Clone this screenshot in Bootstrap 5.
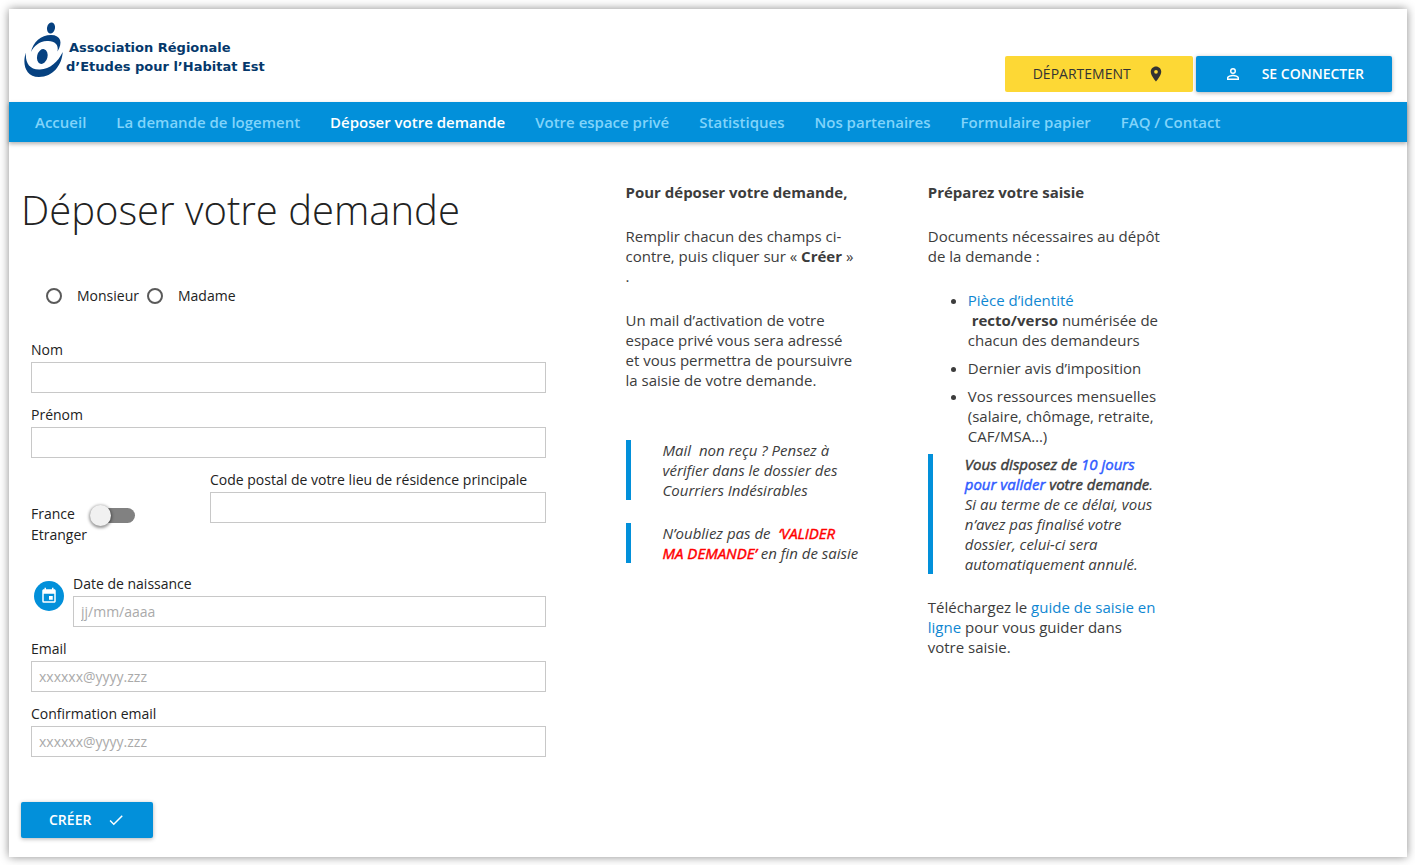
<!DOCTYPE html>
<html lang="fr">
<head>
<meta charset="utf-8">
<meta name="viewport" content="width=device-width, initial-scale=1">
<title>Déposer votre demande</title>
<link href="https://cdn.jsdelivr.net/npm/bootstrap@5.3.0/dist/css/bootstrap.min.css" rel="stylesheet">
<style>
  :root { --brand: #0290da; }
  body { font-family: "Open Sans", sans-serif; font-size: 15px; line-height: 20px; color: #3c3c3c; background: #fff; }
  a { color: #0f87d2; text-decoration: none; }
  p { margin-bottom: 24px; }
  .sheet { margin: 9px 8px 8px 9px; background: #fff; box-shadow: 0 0 9px rgba(0,0,0,.45); }
  .masthead { min-height: 93px; padding: 10px 15px; }
  .logo-name { font: 700 13px/19px "DejaVu Sans", sans-serif; color: #05386b; padding-top: 19px; }
  .logo-name span { display: block; white-space: nowrap; }
  .logo-name span:first-child { padding-left: 3px; }
  .action { --bs-btn-border-radius: 2px; --bs-btn-border-width: 0; --bs-btn-padding-x: 28px; --bs-btn-padding-y: 0; --bs-btn-font-size: 14px; --bs-btn-line-height: 36px; height: 36px; gap: 16px; }
  .action svg { width: 18px; height: 18px; fill: currentColor; }
  .action-brand, .action-brand:hover { background: var(--brand); color: #fff; font-weight: 600; box-shadow: 0 1px 4px rgba(0,0,0,.3); }
  .action-place, .action-place:hover { background: #fdd835; color: #333; }
  .action-login { gap: 20px; }
  .header-actions { gap: 3px; }
  .main-menu { background: var(--brand); padding: 0 11px; min-height: 40px; box-shadow: 0 2px 4px rgba(0,0,0,.3); }
  .main-menu .nav-link { padding: 0 15px; line-height: 40px; font-weight: 600; color: #81d4fa; }
  .main-menu .nav-link.active { color: #fff; }
  .content { max-width: 1221px; padding: 40px 0 19px 12px; }
  .col-form { padding-right: 70px; }
  .col-help { padding-right: 68px; }
  h1 { font-weight: 300; font-size: 40px; line-height: 44px; margin: 6px 0 0; color: #222; }
  .entry { color: #222; font-size: 14px; line-height: 21px; padding: 53px 10px 45px; }
  .civility { padding-left: 15px; margin-bottom: 33px; }
  .civility input { appearance: none; width: 16px; height: 16px; margin: 0 15px 0 0; border: 2px solid #5a5a5a; border-radius: 50%; }
  .civility input:checked { background: var(--brand); box-shadow: inset 0 0 0 2px #fff; }
  .field { margin-bottom: 11px; }
  .field label { display: block; margin-bottom: 2px; }
  .field .form-control { height: 31px; padding: 0 7px; border: 1px solid #c8c8c8; border-radius: 0; font-size: 14px; }
  .field .form-control::placeholder { color: #aaa; }
  .residence { margin-bottom: 28px; }
  .country { width: 179px; padding-top: 34px; }
  .country label { display: block; width: 112px; }
  .lever { appearance: none; position: relative; width: 40px; height: 15px; margin: 0 0 0 16px; border-radius: 15px; background: #818181; vertical-align: -4px; }
  .lever::before { content: ""; position: absolute; left: -5px; top: -3px; width: 21px; height: 21px; border-radius: 50%; background: #f1f1f1; box-shadow: 0 1px 3px 1px rgba(0,0,0,.4); }
  .lever:checked::before { left: 24px; }
  .date-btn { width: 30px; height: 30px; margin: 8px 9px 0 3px; border: 0; border-radius: 50%; background: var(--brand); }
  .note { margin: 0 0 23px; padding-left: 32px; border-left: 5px solid var(--brand); font-style: italic; }
  .note strong { font-weight: 400; -webkit-text-stroke: .03em currentColor; }
  .note .alert-word { color: #f00; }
  .note .delay { color: #2f5bff; }
  .before-notes { margin-bottom: 50px; }
  .documents { padding-left: 40px; margin: 0; }
  .documents li { margin-bottom: 8px; }
</style>
</head>
<body>
<div class="sheet">
  <header class="masthead d-flex flex-wrap justify-content-between">
    <a class="d-flex" href="#" aria-label="Accueil AREHA Est">
      <svg width="42" height="62" viewBox="0 0 42 62" fill="#064180" aria-hidden="true">
        <ellipse cx="27" cy="9" rx="4" ry="5.500" transform="rotate(12 27 9)"/>
        <ellipse cx="18.300" cy="37.500" rx="5.200" ry="7.600" transform="rotate(14 18.300 37.500)"/>
        <path d="M7 33C9 23 17 16 27 16C37 16 39 24 33.500 32.500C35 25 30 21.500 23 22C15 22.500 10 27 7 33Z"/>
        <path d="M2 33.500C-2 44 1 58 15 58C29 58 38 46 38.700 33C34 43 26 50 16 50.500C5 51 1 43 2 33.500Z"/>
      </svg>
      <div class="logo-name"><span>Association Régionale</span><span>d’Etudes pour l’Habitat Est</span></div>
    </a>
    <div class="header-actions d-flex align-self-end">
      <a class="btn action action-place d-flex align-items-center" href="#">DÉPARTEMENT
        <svg viewBox="0 0 24 24" aria-hidden="true"><path d="M12 2C8.130 2 5 5.130 5 9c0 5.250 7 13 7 13s7-7.750 7-13c0-3.870-3.130-7-7-7zm0 9.500a2.500 2.500 0 0 1 0-5 2.500 2.500 0 0 1 0 5z"/></svg>
      </a>
      <a class="btn action action-brand action-login d-flex align-items-center" href="#">
        <svg viewBox="0 0 24 24" aria-hidden="true"><path d="M12 5.900a2.100 2.100 0 1 1 0 4.200 2.100 2.100 0 0 1 0-4.200m0 9c2.970 0 6.100 1.460 6.100 2.100v1.100H5.900V17c0-.640 3.130-2.100 6.100-2.100M12 4a4 4 0 1 0 0 8 4 4 0 0 0 0-8zm0 9c-2.670 0-8 1.340-8 4v3h16v-3c0-2.660-5.330-4-8-4z"/></svg>
        SE CONNECTER
      </a>
    </div>
  </header>

  <nav class="main-menu" aria-label="Menu principal">
    <ul class="nav">
      <li class="nav-item"><a class="nav-link" href="#">Accueil</a></li>
      <li class="nav-item"><a class="nav-link" href="#">La demande de logement</a></li>
      <li class="nav-item"><a class="nav-link active" aria-current="page" href="#">Déposer votre demande</a></li>
      <li class="nav-item"><a class="nav-link" href="#">Votre espace privé</a></li>
      <li class="nav-item"><a class="nav-link" href="#">Statistiques</a></li>
      <li class="nav-item"><a class="nav-link" href="#">Nos partenaires</a></li>
      <li class="nav-item"><a class="nav-link" href="#">Formulaire papier</a></li>
      <li class="nav-item"><a class="nav-link" href="#">FAQ / Contact</a></li>
    </ul>
  </nav>

  <main class="content">
    <div class="row g-0">
      <div class="col-md-6 col-form">
        <h1>Déposer votre demande</h1>
        <form>
          <div class="entry">
            <div class="civility d-flex gap-2">
              <div class="d-flex align-items-center"><input type="radio" name="civilite" id="mr"><label for="mr">Monsieur</label></div>
              <div class="d-flex align-items-center"><input type="radio" name="civilite" id="mme"><label for="mme">Madame</label></div>
            </div>
            <div class="field"><label for="nom">Nom</label><input class="form-control" type="text" id="nom"></div>
            <div class="field"><label for="prenom">Prénom</label><input class="form-control" type="text" id="prenom"></div>
            <div class="residence d-flex">
              <div class="country"><label for="pays">France <input class="lever" type="checkbox" role="switch" id="pays"> Etranger</label></div>
              <div class="field flex-grow-1"><label for="cp">Code postal de votre lieu de résidence principale</label><input class="form-control" type="text" id="cp"></div>
            </div>
            <div class="d-flex align-items-start">
              <button class="date-btn d-flex align-items-center justify-content-center p-0" type="button" aria-label="Choisir une date">
                <svg width="18" height="18" viewBox="0 0 24 24" fill="#fff" aria-hidden="true"><path fill-rule="evenodd" d="M16 1v2H8V1H6v2H5c-1.100 0-2 .900-2 2v14a2 2 0 0 0 2 2h14c1.100 0 2-.900 2-2V5c0-1.100-.900-2-2-2h-1V1h-2zM5 9h14v10H5zM12 12v5h5v-5z"/></svg>
              </button>
              <div class="field flex-grow-1"><label for="naissance">Date de naissance</label><input class="form-control" type="text" id="naissance" placeholder="jj/mm/aaaa"></div>
            </div>
            <div class="field"><label for="email">Email</label><input class="form-control" type="email" id="email" placeholder="xxxxxx@yyyy.zzz"></div>
            <div class="field mb-0"><label for="email2">Confirmation email</label><input class="form-control" type="email" id="email2" placeholder="xxxxxx@yyyy.zzz"></div>
          </div>
          <button class="btn action action-brand d-flex align-items-center" type="submit">CRÉER
            <svg viewBox="0 0 24 24" aria-hidden="true"><path d="M9 16.170 4.830 12l-1.420 1.410L9 19 21 7l-1.410-1.410z"/></svg>
          </button>
        </form>
      </div>

      <div class="col-md-3 col-help">
        <p><strong>Pour déposer votre demande,</strong></p>
        <p>Remplir chacun des champs ci-contre, puis cliquer sur «&nbsp;<strong>Créer</strong>&nbsp;» .</p>
        <p class="before-notes">Un mail d’activation de votre espace privé vous sera adressé et vous permettra de poursuivre la saisie de votre demande.</p>
        <blockquote class="note">Mail&nbsp; non reçu ? Pensez à vérifier dans le dossier des Courriers Indésirables</blockquote>
        <blockquote class="note">N’oubliez pas de&nbsp; <strong class="alert-word">‘VALIDER MA DEMANDE’</strong> en fin de saisie</blockquote>
      </div>

      <div class="col-md-3 col-help">
        <p><strong>Préparez votre saisie</strong></p>
        <p>Documents nécessaires au dépôt de la demande :</p>
        <ul class="documents">
          <li><a href="#">Pièce d’identité </a>&nbsp;<strong>recto/verso</strong> numérisée de chacun des demandeurs</li>
          <li>Dernier avis d’imposition</li>
          <li>Vos ressources mensuelles (salaire, chômage, retraite, CAF/MSA…)</li>
        </ul>
        <blockquote class="note"><strong>Vous disposez de <span class="delay">10 jours pour valider</span> votre demande</strong>. Si au terme de ce délai, vous n’avez pas finalisé votre dossier, celui-ci sera automatiquement annulé.</blockquote>
        <p>Téléchargez le <a href="#">guide de saisie en ligne</a> pour vous guider dans votre saisie.</p>
      </div>
    </div>
  </main>
</div>
<script src="https://cdn.jsdelivr.net/npm/bootstrap@5.3.0/dist/js/bootstrap.bundle.min.js"></script>
</body>
</html>
